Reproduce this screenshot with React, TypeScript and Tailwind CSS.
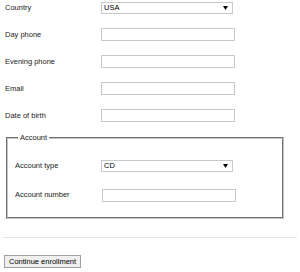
const font = { fontFamily: '"Liberation Sans", Arial, sans-serif' };

const TextBox = () => <div className="h-[13px] w-[134px] border border-[#c8c8c8] bg-white" />;

const SelectBox = ({ value }: { value: string }) => (
  <div className="flex h-[12px] w-[132px] items-center justify-between border border-[#c8c8c8] bg-white pl-[2px] pr-[4px]">
    <span className="text-[7.5px] leading-none text-black">{value}</span>
    <svg width="5" height="4" viewBox="0 0 5 4">
      <path d="M0 0h5L2.5 4z" fill="#000" />
    </svg>
  </div>
);

const Row = ({ label, children, labelW = "w-[96px]" }: { label: string; children: React.ReactNode; labelW?: string }) => (
  <div className="flex h-[13px] items-center">
    <div className={`${labelW} text-[7.5px] leading-none text-[#222]`}>{label}</div>
    {children}
  </div>
);

export default function App() {
  return (
    <div className="h-[272px] w-[300px] overflow-hidden bg-white" style={font}>
      <div className="flex flex-col gap-[14px] pl-[5px] pt-[1px]">
        <Row label="Country">
          <SelectBox value="USA" />
        </Row>
        <Row label="Day phone">
          <TextBox />
        </Row>
        <Row label="Evening phone">
          <TextBox />
        </Row>
        <Row label="Email">
          <TextBox />
        </Row>
        <Row label="Date of birth">
          <TextBox />
        </Row>
      </div>

      <fieldset className="ml-[6px] mt-[12px] h-[85px] w-[278px] border-2 border-[#c4c4c4] [border-style:groove] pl-[7px]">
        <legend className="ml-[3px] px-[2px] text-[7.5px] leading-none text-[#222]">Account</legend>
        <div className="flex flex-col gap-[16px] pt-[18px]">
          <Row label="Account type" labelW="w-[86px]">
            <SelectBox value="CD" />
          </Row>
          <Row label="Account number" labelW="w-[87px]">
            <TextBox />
          </Row>
        </div>
      </fieldset>

      <div className="mx-[3px] mt-[18px] h-px bg-[#e4e4e4]" />

      <button className="ml-[4px] mt-[17px] h-[13px] border border-[#a0a0a0] bg-[#f0f0f0] px-[4px] text-[7.5px] leading-none text-black">
        Continue enrollment
      </button>
    </div>
  );
}
